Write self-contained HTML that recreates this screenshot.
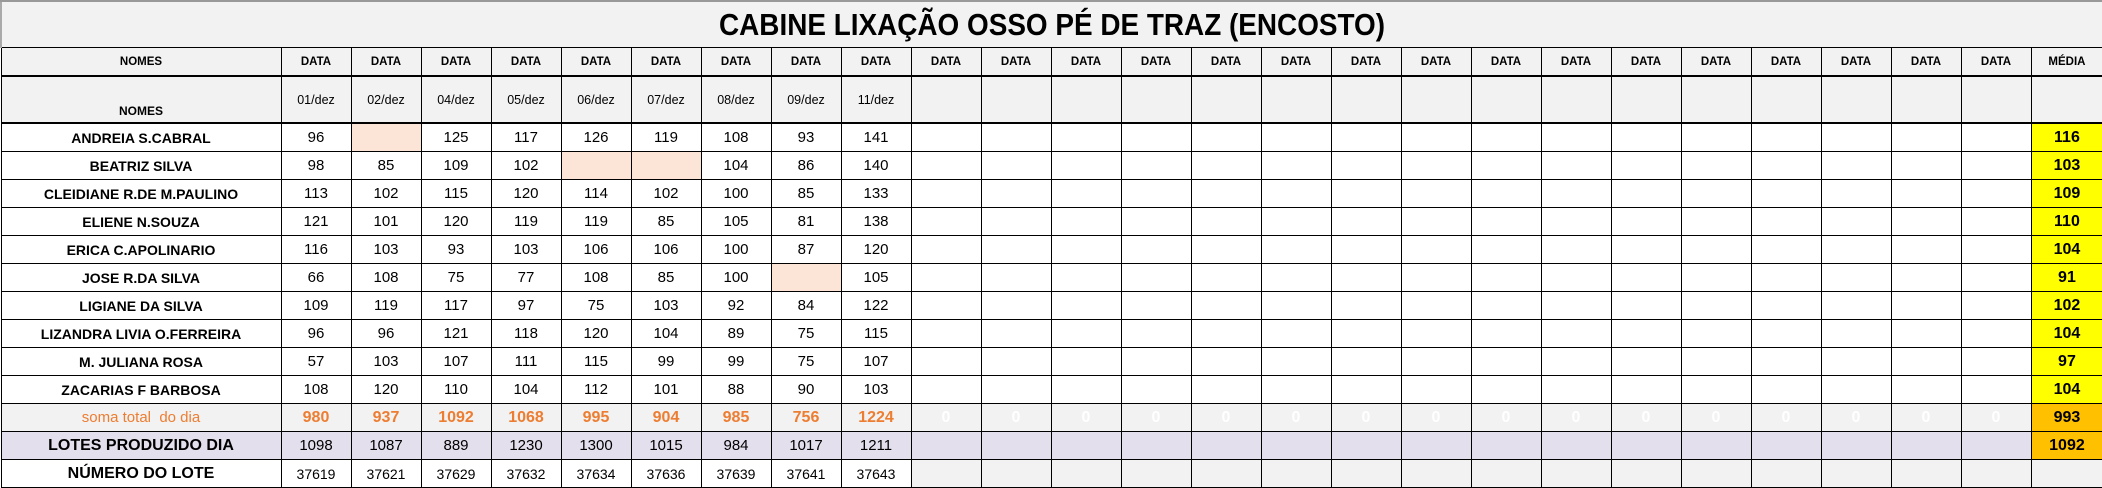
<!DOCTYPE html>
<html><head><meta charset="utf-8"><style>
html,body{margin:0;padding:0;background:#fff;width:2102px;height:488px;overflow:hidden}
table{border-collapse:collapse;table-layout:fixed;width:2102px;font-family:"Liberation Sans",sans-serif;position:absolute;left:0;top:0}
td{border:1px solid #000;padding:0;text-align:center;vertical-align:middle;overflow:hidden;white-space:nowrap;font-size:15px;color:#000}
.t td{background:#f2f2f2;height:45px;font-weight:bold;font-size:31px;border-top:2px solid #999;border-left:2px solid #aaa}
.t span{display:inline-block;transform:scaleX(0.9)}
.h1 td{background:#f2f2f2;height:27px;font-weight:bold;font-size:11.5px;border-bottom:2px solid #000}
.h2 td{background:#f2f2f2;height:41px;font-size:12.5px;border-bottom:2px solid #000}
.h2 td.n{vertical-align:bottom;font-weight:bold;font-size:12px;padding-bottom:4px}
.r td{height:27px}
.r td.n{font-weight:bold;font-size:14px}
td.p{background:#fce4d6}
.s td{background:#f2f2f2;color:#ed7d31;font-weight:bold;font-size:16px;height:27px}
.s td.z{color:#fff}
.s td.n{font-size:15px;font-weight:normal}
.l td{background:#e4dfec;height:27px}
.l td.n{font-weight:bold;font-size:16px}
.m td{height:27px;font-size:14px}
.m td.g{background:#f2f2f2}
.m td.n{font-weight:bold;font-size:16px}
td.y{background:#ffff00 !important;font-weight:bold;color:#000 !important;font-size:16px}
td.o{background:#ffc000 !important;font-weight:bold;color:#000 !important;font-size:16px}
tr td:last-child{border-right:2px solid #000}
</style></head><body>
<table>
<colgroup><col style="width:280px"><col span="25" style="width:70px"><col style="width:72px"></colgroup>
<tr class="t"><td colspan="27"><span>CABINE LIXAÇÃO OSSO PÉ DE TRAZ (ENCOSTO)</span></td></tr>
<tr class="h1"><td>NOMES</td><td>DATA</td><td>DATA</td><td>DATA</td><td>DATA</td><td>DATA</td><td>DATA</td><td>DATA</td><td>DATA</td><td>DATA</td><td>DATA</td><td>DATA</td><td>DATA</td><td>DATA</td><td>DATA</td><td>DATA</td><td>DATA</td><td>DATA</td><td>DATA</td><td>DATA</td><td>DATA</td><td>DATA</td><td>DATA</td><td>DATA</td><td>DATA</td><td>DATA</td><td>MÉDIA</td></tr>
<tr class="h2"><td class="n">NOMES</td><td>01/dez</td><td>02/dez</td><td>04/dez</td><td>05/dez</td><td>06/dez</td><td>07/dez</td><td>08/dez</td><td>09/dez</td><td>11/dez</td><td></td><td></td><td></td><td></td><td></td><td></td><td></td><td></td><td></td><td></td><td></td><td></td><td></td><td></td><td></td><td></td><td></td></tr>
<tr class="r"><td class="n">ANDREIA S.CABRAL</td><td>96</td><td class="p"></td><td>125</td><td>117</td><td>126</td><td>119</td><td>108</td><td>93</td><td>141</td><td></td><td></td><td></td><td></td><td></td><td></td><td></td><td></td><td></td><td></td><td></td><td></td><td></td><td></td><td></td><td></td><td class="y">116</td></tr>
<tr class="r"><td class="n">BEATRIZ SILVA</td><td>98</td><td>85</td><td>109</td><td>102</td><td class="p"></td><td class="p"></td><td>104</td><td>86</td><td>140</td><td></td><td></td><td></td><td></td><td></td><td></td><td></td><td></td><td></td><td></td><td></td><td></td><td></td><td></td><td></td><td></td><td class="y">103</td></tr>
<tr class="r"><td class="n">CLEIDIANE R.DE M.PAULINO</td><td>113</td><td>102</td><td>115</td><td>120</td><td>114</td><td>102</td><td>100</td><td>85</td><td>133</td><td></td><td></td><td></td><td></td><td></td><td></td><td></td><td></td><td></td><td></td><td></td><td></td><td></td><td></td><td></td><td></td><td class="y">109</td></tr>
<tr class="r"><td class="n">ELIENE N.SOUZA</td><td>121</td><td>101</td><td>120</td><td>119</td><td>119</td><td>85</td><td>105</td><td>81</td><td>138</td><td></td><td></td><td></td><td></td><td></td><td></td><td></td><td></td><td></td><td></td><td></td><td></td><td></td><td></td><td></td><td></td><td class="y">110</td></tr>
<tr class="r"><td class="n">ERICA C.APOLINARIO</td><td>116</td><td>103</td><td>93</td><td>103</td><td>106</td><td>106</td><td>100</td><td>87</td><td>120</td><td></td><td></td><td></td><td></td><td></td><td></td><td></td><td></td><td></td><td></td><td></td><td></td><td></td><td></td><td></td><td></td><td class="y">104</td></tr>
<tr class="r"><td class="n">JOSE R.DA SILVA</td><td>66</td><td>108</td><td>75</td><td>77</td><td>108</td><td>85</td><td>100</td><td class="p"></td><td>105</td><td></td><td></td><td></td><td></td><td></td><td></td><td></td><td></td><td></td><td></td><td></td><td></td><td></td><td></td><td></td><td></td><td class="y">91</td></tr>
<tr class="r"><td class="n">LIGIANE DA SILVA</td><td>109</td><td>119</td><td>117</td><td>97</td><td>75</td><td>103</td><td>92</td><td>84</td><td>122</td><td></td><td></td><td></td><td></td><td></td><td></td><td></td><td></td><td></td><td></td><td></td><td></td><td></td><td></td><td></td><td></td><td class="y">102</td></tr>
<tr class="r"><td class="n">LIZANDRA LIVIA O.FERREIRA</td><td>96</td><td>96</td><td>121</td><td>118</td><td>120</td><td>104</td><td>89</td><td>75</td><td>115</td><td></td><td></td><td></td><td></td><td></td><td></td><td></td><td></td><td></td><td></td><td></td><td></td><td></td><td></td><td></td><td></td><td class="y">104</td></tr>
<tr class="r"><td class="n">M. JULIANA ROSA</td><td>57</td><td>103</td><td>107</td><td>111</td><td>115</td><td>99</td><td>99</td><td>75</td><td>107</td><td></td><td></td><td></td><td></td><td></td><td></td><td></td><td></td><td></td><td></td><td></td><td></td><td></td><td></td><td></td><td></td><td class="y">97</td></tr>
<tr class="r"><td class="n">ZACARIAS F BARBOSA</td><td>108</td><td>120</td><td>110</td><td>104</td><td>112</td><td>101</td><td>88</td><td>90</td><td>103</td><td></td><td></td><td></td><td></td><td></td><td></td><td></td><td></td><td></td><td></td><td></td><td></td><td></td><td></td><td></td><td></td><td class="y">104</td></tr>
<tr class="s"><td class="n">soma total &nbsp;do dia</td><td>980</td><td>937</td><td>1092</td><td>1068</td><td>995</td><td>904</td><td>985</td><td>756</td><td>1224</td><td class="z">0</td><td class="z">0</td><td class="z">0</td><td class="z">0</td><td class="z">0</td><td class="z">0</td><td class="z">0</td><td class="z">0</td><td class="z">0</td><td class="z">0</td><td class="z">0</td><td class="z">0</td><td class="z">0</td><td class="z">0</td><td class="z">0</td><td class="z">0</td><td class="o">993</td></tr>
<tr class="l"><td class="n">LOTES PRODUZIDO DIA</td><td>1098</td><td>1087</td><td>889</td><td>1230</td><td>1300</td><td>1015</td><td>984</td><td>1017</td><td>1211</td><td></td><td></td><td></td><td></td><td></td><td></td><td></td><td></td><td></td><td></td><td></td><td></td><td></td><td></td><td></td><td></td><td class="o">1092</td></tr>
<tr class="m"><td class="n">NÚMERO DO LOTE</td><td>37619</td><td>37621</td><td>37629</td><td>37632</td><td>37634</td><td>37636</td><td>37639</td><td>37641</td><td>37643</td><td class="g"></td><td class="g"></td><td class="g"></td><td class="g"></td><td class="g"></td><td class="g"></td><td class="g"></td><td class="g"></td><td class="g"></td><td class="g"></td><td class="g"></td><td class="g"></td><td class="g"></td><td class="g"></td><td class="g"></td><td class="g"></td><td class="g"></td></tr>
</table>
</body></html>
